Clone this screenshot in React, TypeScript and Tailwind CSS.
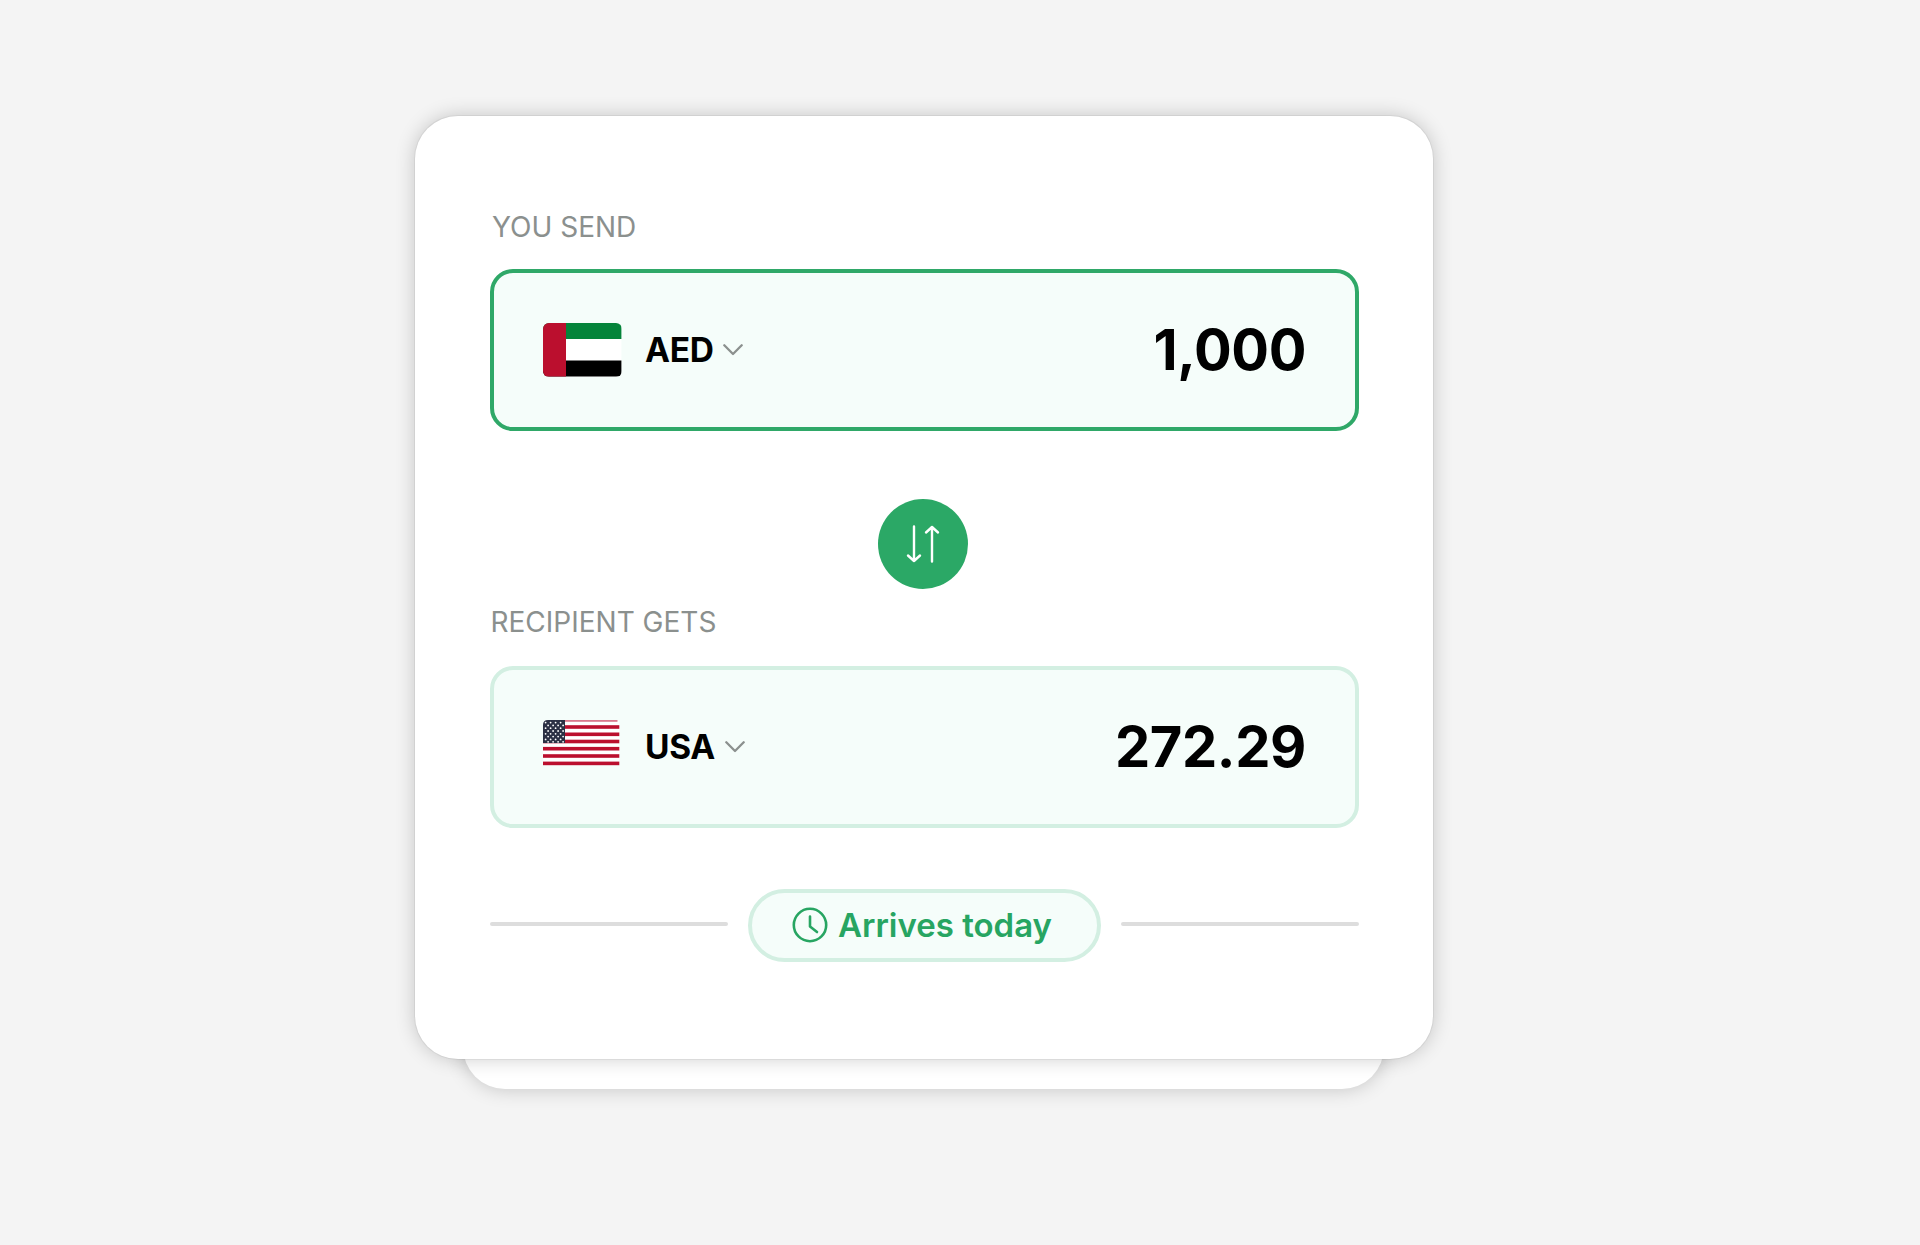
import type { ReactNode } from "react";

function UaeFlag() {
  return (
    <svg width="79" height="54" viewBox="0 0 79 54" className="shrink-0 rounded-[6px]">
      <rect width="78.4" height="54" fill="#fff" />
      <rect width="78.4" height="16" fill="#04843a" />
      <rect y="37.5" width="78.4" height="16" fill="#000" />
      <rect width="23" height="53.5" fill="#bb0f2e" />
    </svg>
  );
}

const STRIPES = [5.2, 12.5, 19.7, 26.9, 34.2, 41.6];
const STAR_ROWS = [2.6, 5.4, 8.2, 11, 13.8, 16.6, 19.4, 21.8];

function UsaFlag() {
  return (
    <svg width="79" height="54" viewBox="0 0 79 54" className="shrink-0">
      <path d="M5 0H74Q76 0 76.3 3V45.3H0V5Q0 0 5 0Z" fill="#fff" />
      <rect x="5" width="69.5" height="1.8" fill="#d9788c" />
      {STRIPES.map((y) => (
        <rect key={y} y={y} width="76.3" height="3.6" fill="#bb0f2e" />
      ))}
      <path d="M5 0H22V23H0V5Q0 0 5 0Z" fill="#2b3044" />
      {STAR_ROWS.map((y, row) =>
        [2.6, 7.6, 12.6, 17.6].map((x) => (
          <circle key={`${x}-${y}`} cx={x + (row % 2) * 2.5} cy={y} r="0.9" fill="#fff" />
        ))
      )}
    </svg>
  );
}

function Chevron() {
  return (
    <svg width="20" height="12" viewBox="0 0 20 12" fill="none" className="ml-[9.5px]">
      <path d="M1.3 1.3L10 10L18.7 1.3" stroke="#8b908e" strokeWidth="2.3" strokeLinecap="round" strokeLinejoin="round" />
    </svg>
  );
}

interface AmountBoxProps {
  flag: ReactNode;
  code: string;
  amount: string;
  active?: boolean;
}

function AmountBox({ flag, code, amount, active }: AmountBoxProps) {
  return (
    <div
      className={`flex h-[162px] items-center justify-between rounded-[23px] bg-[#f5fdfa] px-[49px] ${
        active ? "border-4 border-[#2fa868]" : "border-4 border-[#d3efe2]"
      }`}
    >
      <div className="flex items-center">
        {flag}
        <span className="ml-[23px] text-[33.5px] leading-10 font-bold tracking-[-0.3px]">{code}</span>
        <Chevron />
      </div>
      <span className="text-[56px] leading-none font-bold tracking-[-0.4px]">{amount}</span>
    </div>
  );
}

export default function App() {
  return (
    <div className="h-[1245px] w-[1920px] overflow-hidden bg-[#f4f4f4] pt-[116px] pl-[415px] font-['Inter',sans-serif] text-black">
      <div className="relative z-10 h-[943px] w-[1018px] rounded-[43px] bg-white pt-[95px] pr-[74px] pl-[75px] shadow-[0_0_0_1px_rgba(0,0,0,0.05),0_0_20px_rgba(0,0,0,0.2)]">
        <div className="pl-0.5 text-[28px] leading-8 text-[#8b908e]">YOU SEND</div>
        <div className="mt-[26px]">
          <AmountBox active flag={<UaeFlag />} code="AED" amount="1,000" />
        </div>

        <div className="mt-[67.5px] flex justify-center pr-[3px]">
          <button className="flex size-[90px] items-center justify-center rounded-full bg-[#2ba866]">
            <svg width="34" height="38" viewBox="0 0 34 38" fill="none" stroke="#fff" strokeWidth="2.4" strokeLinecap="round" strokeLinejoin="round">
              <path d="M8 1.5V36M2 30.5L8 36L14 30.5" />
              <path d="M26 36.5V2M20 7.5L26 2L32 7.5" />
            </svg>
          </button>
        </div>

        <div className="mt-[17.5px] pl-[0.5px] text-[28px] leading-8 text-[#8b908e]">RECIPIENT GETS</div>
        <div className="mt-7">
          <AmountBox flag={<UsaFlag />} code="USA" amount="272.29" />
        </div>

        <div className="mt-[61px] flex items-center justify-between">
          <div className="mb-[3px] h-1 w-[238px] rounded-full bg-[#dddddd]" />
          <div className="flex h-[73px] w-[353px] items-center rounded-full border-4 border-[#d3efe2] bg-[#f5fdfa] pb-[2px] pl-10 text-[#27a562]">
            <svg width="36" height="36" viewBox="0 0 36 36" fill="none" stroke="currentColor" strokeWidth="2.6" strokeLinecap="round" strokeLinejoin="round">
              <circle cx="18" cy="18" r="16.2" />
              <path d="M18 9.5V19.5L25 25" />
            </svg>
            <span className="ml-2.5 text-[33px] leading-10 font-semibold whitespace-nowrap">Arrives today</span>
          </div>
          <div className="mb-[3px] h-1 w-[238px] rounded-full bg-[#dddddd]" />
        </div>
      </div>

      {/* second card peeking out underneath */}
      <div className="-mt-[70px] ml-[48px] h-[100px] w-[921px] rounded-b-[42px] bg-white shadow-[0_0_20px_rgba(0,0,0,0.2)]" />
    </div>
  );
}
